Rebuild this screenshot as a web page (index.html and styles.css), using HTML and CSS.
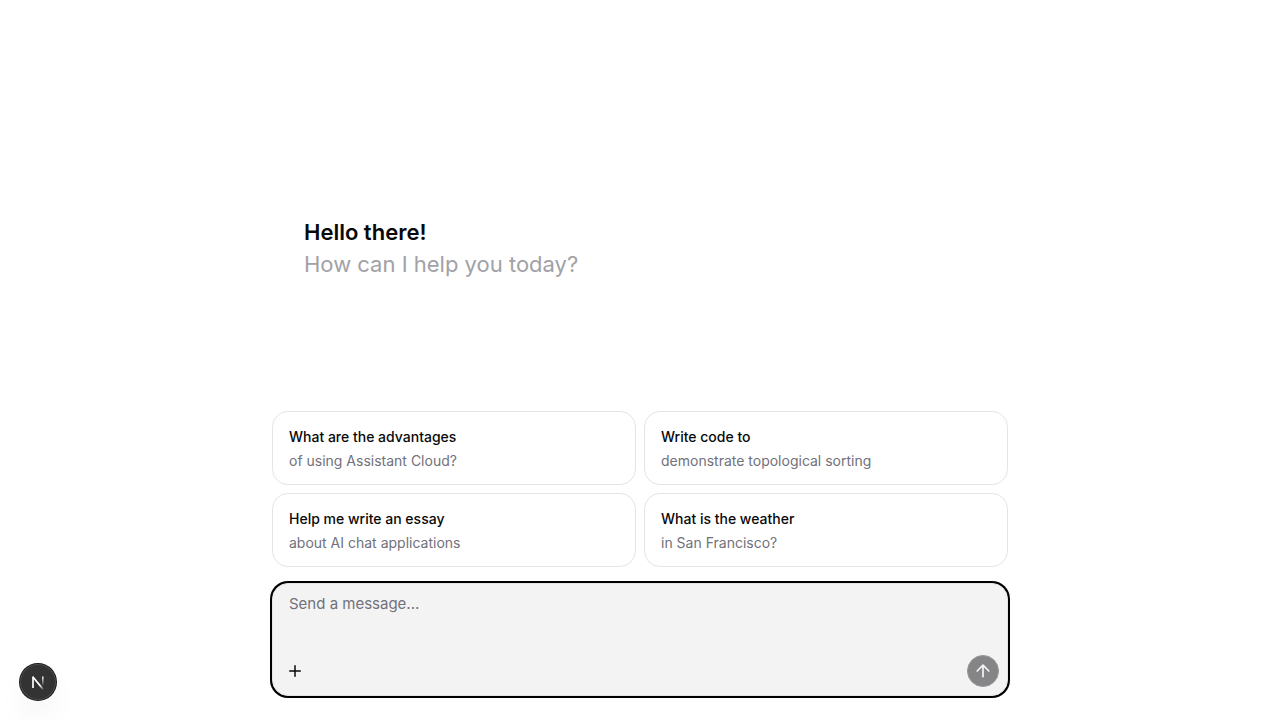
FILE: index.html
```html
<!DOCTYPE html>
<html lang="en">
<head>
<meta charset="utf-8">
<meta name="viewport" content="width=device-width, initial-scale=1">
<title>Assistant</title>
<link rel="stylesheet" href="styles.css">
</head>
<body>
<main class="thread">
  <section class="welcome">
    <h1 class="welcome-title">Hello there!</h1>
    <p class="welcome-subtitle">How can I help you today?</p>
  </section>
  <section class="suggestions" aria-label="Suggestions">
    <button class="suggestion" type="button"><span class="suggestion-title">What are the advantages</span><span class="suggestion-text">of using Assistant Cloud?</span></button>
    <button class="suggestion" type="button"><span class="suggestion-title">Write code to</span><span class="suggestion-text">demonstrate topological sorting</span></button>
    <button class="suggestion" type="button"><span class="suggestion-title">Help me write an essay</span><span class="suggestion-text">about AI chat applications</span></button>
    <button class="suggestion" type="button"><span class="suggestion-title">What is the weather</span><span class="suggestion-text">in San Francisco?</span></button>
  </section>
  <form class="composer">
    <textarea class="composer-input" rows="2" placeholder="Send a message..." aria-label="Message input"></textarea>
    <div class="composer-actions">
      <button class="attach" type="button" aria-label="Add attachment">
        <svg width="18" height="18" viewBox="0 0 24 24" fill="none" stroke="currentColor" stroke-width="2" stroke-linecap="round" stroke-linejoin="round"><path d="M5 12h14M12 5v14"/></svg>
      </button>
      <button class="send" type="submit" aria-label="Send message" disabled>
        <svg width="20" height="20" viewBox="0 0 24 24" fill="none" stroke="currentColor" stroke-width="2" stroke-linecap="round" stroke-linejoin="round"><path d="m5 12 7-7 7 7M12 19V5"/></svg>
      </button>
    </div>
  </form>
</main>
<button class="dev-badge" type="button" aria-label="Open Next.js Dev Tools">
  <svg width="36" height="36" viewBox="0 0 36 36" fill="none">
    <defs>
      <linearGradient id="diagonal" x1="20" y1="21" x2="24" y2="26" gradientUnits="userSpaceOnUse"><stop stop-color="#fff"/><stop offset="1" stop-color="#fff" stop-opacity="0"/></linearGradient>
      <linearGradient id="stem" x1="23" y1="12" x2="23" y2="22" gradientUnits="userSpaceOnUse"><stop stop-color="#fff"/><stop offset="1" stop-color="#fff" stop-opacity="0"/></linearGradient>
    </defs>
    <path d="M13 13l10.2 12.4" stroke="url(#diagonal)" stroke-width="1.7"/>
    <path d="M13 24V12.4" stroke="#fff" stroke-width="1.7"/>
    <path d="M22.8 12.4V22" stroke="url(#stem)" stroke-width="1.6"/>
  </svg>
</button>
</body>
</html>
```
FILE: styles.css
```css
* {
  box-sizing: border-box;
}

body {
  margin: 0;
  background: #fff;
  color: #09090b;
  font-family: Inter, "Liberation Sans", sans-serif;
}

button {
  margin: 0;
  padding: 0;
  border: 0;
  background: none;
  color: inherit;
  font: inherit;
}

.thread {
  display: flex;
  flex-direction: column;
  min-height: 100vh;
  max-width: 768px;
  margin: 0 auto;
  padding: 0 16px 24px;
}

.welcome {
  display: flex;
  flex: 1;
  flex-direction: column;
  justify-content: center;
  padding: 84px 32px 0;
  font-size: 22px;
  line-height: 32px;
}

.welcome-title {
  margin: 0;
  font-size: 22px;
  font-weight: 600;
}

.welcome-subtitle {
  margin: 0;
  color: #a1a1a6;
}

.suggestions {
  display: grid;
  grid-template-columns: 1fr 1fr;
  gap: 8px;
  margin-bottom: 16px;
}

.suggestion {
  display: flex;
  flex-direction: column;
  gap: 4px;
  padding: 15px 16px 13px;
  border: 1px solid #e4e4e7;
  border-radius: 16px;
  font-size: 14px;
  line-height: 20px;
  text-align: left;
}

.suggestion-title {
  font-weight: 500;
}

.suggestion-text {
  color: #71717a;
}

.composer {
  display: flex;
  flex-direction: column;
  border: 1px solid #e4e4e7;
  border-radius: 16px;
  background: #f3f3f3;
  box-shadow: 0 0 0 2px #000;
}

.composer-input {
  display: block;
  width: 100%;
  height: 64px;
  padding: 8px 16px;
  border: 0;
  outline: 0;
  background: transparent;
  color: inherit;
  font: inherit;
  font-size: 15px;
  line-height: 24px;
  resize: none;
}

.composer-input::placeholder {
  color: #71717a;
  opacity: 1;
}

.composer-actions {
  display: flex;
  align-items: center;
  justify-content: space-between;
  padding: 7px 8px 8px;
}

.attach,
.send {
  display: grid;
  place-items: center;
  width: 32px;
  height: 32px;
  border-radius: 50%;
}

.attach {
  width: 28px;
}

.send {
  border: 1px solid #98989a;
  background: #858587;
  color: #f7f7f7;
}

.dev-badge {
  position: fixed;
  bottom: 20px;
  left: 20px;
  width: 36px;
  height: 36px;
  border-radius: 50%;
  background: #333;
  box-shadow: 0 0 0 1px #171717, inset 0 0 0 1px #4a4a4a, 0 16px 32px -8px rgba(0, 0, 0, 0.14);
}

.dev-badge svg {
  display: block;
}
```
